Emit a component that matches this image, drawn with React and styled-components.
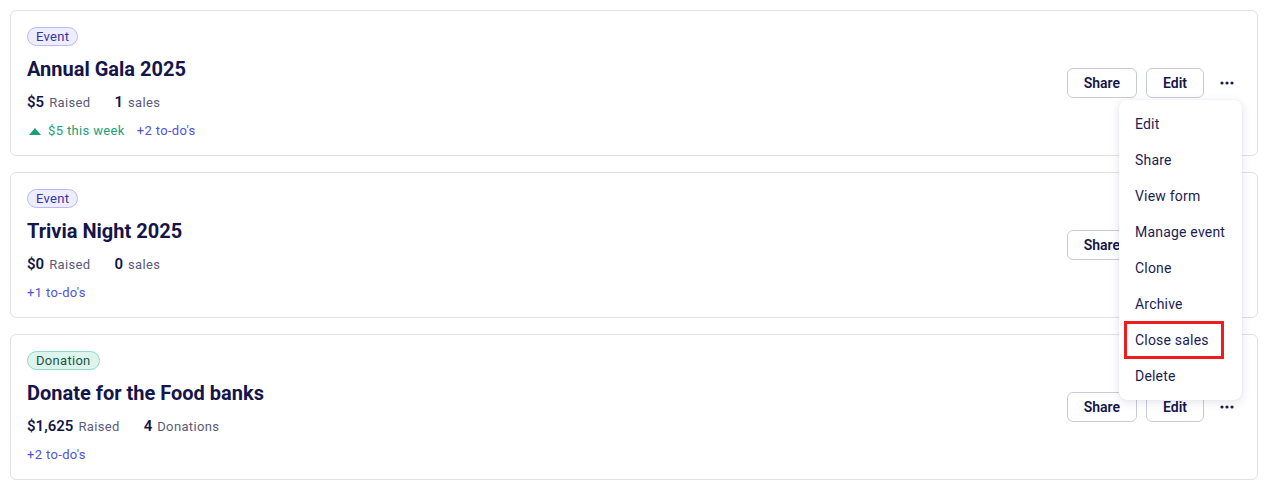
import React from 'react';
import styled, { createGlobalStyle, css } from 'styled-components';

const GlobalStyle = createGlobalStyle`
  body {
    margin: 0;
    background: #ffffff;
    font-family: Roboto, "Liberation Sans", sans-serif;
    color: #16164d;
  }
`;

const Page = styled.div`
  display: flex;
  flex-direction: column;
  gap: 16px;
  padding: 10px;
`;

const Card = styled.div`
  display: flex;
  align-items: center;
  justify-content: space-between;
  border: 1px solid #e1e1ec;
  border-radius: 6px;
  padding: 16px;
  height: 146px;
  box-sizing: border-box;
  background: #fff;
`;

const Info = styled.div`
  display: flex;
  flex-direction: column;
  align-self: flex-start;
`;

const badgeColors = {
  event: css`
    background: #ededfd;
    border-color: #b9b9f4;
    color: #3535a8;
  `,
  donation: css`
    background: #dcf4ec;
    border-color: #93d9c3;
    color: #1b5646;
  `,
};

const Badge = styled.span`
  align-self: flex-start;
  font-size: 13px;
  line-height: 17px;
  padding: 0 8px;
  border: 1px solid;
  border-radius: 10px;
  letter-spacing: 0.3px;
  ${p => badgeColors[p.$kind]}
`;

const Title = styled.h2`
  margin: 9px 0 0;
  font-size: 20px;
  line-height: 28px;
  font-weight: 700;
  color: #14154a;
`;

const Stats = styled.div`
  display: flex;
  gap: 24px;
  margin-top: 10px;
  align-items: baseline;
`;

const Stat = styled.span`
  font-size: 13px;
  color: #5a5a78;
  letter-spacing: 0.35px;

  b {
    font-size: 15px;
    font-weight: 600;
    color: #14154a;
    margin-right: 5px;
    letter-spacing: 0;
  }
`;

const Meta = styled.div`
  display: flex;
  gap: 12px;
  margin-top: 12px;
  font-size: 13px;
  line-height: 16px;
  letter-spacing: 0.35px;
`;

const Trend = styled.span`
  display: flex;
  align-items: center;
  gap: 7px;
  padding-left: 2px;
  color: #1c9e78;
`;

const Todo = styled.span`
  color: #5252d6;
`;

const Actions = styled.div`
  position: relative;
  display: flex;
  align-items: center;
  gap: 9px;
`;

const Button = styled.button`
  height: 30px;
  padding: 0 16px;
  border: 1px solid #c9c9dc;
  border-radius: 6px;
  background: #fff;
  font-family: inherit;
  font-size: 14px;
  font-weight: 600;
  color: #14154a;
`;

const DotsButton = styled.button`
  width: 28px;
  height: 30px;
  padding: 0;
  border: none;
  background: none;
  display: flex;
  align-items: center;
  justify-content: center;
`;

const Menu = styled.ul`
  position: absolute;
  top: 32px;
  right: -1px;
  width: 123px;
  margin: 0;
  padding: 6px 0;
  list-style: none;
  background: #fff;
  border-radius: 8px;
  box-shadow: 0 2px 10px rgba(40, 40, 90, 0.13), 0 0 1px rgba(40, 40, 90, 0.12);
  z-index: 5;
`;

const MenuItem = styled.li`
  position: relative;
  height: 36px;
  line-height: 36px;
  padding-left: 16px;
  font-size: 14px;
  letter-spacing: 0.2px;
  color: #1c1c52;

  ${p =>
    p.$highlight &&
    css`
      &::after {
        content: '';
        position: absolute;
        left: 5px;
        width: 100px;
        top: -1px;
        bottom: -1px;
        box-sizing: border-box;
        border: 3px solid #ee1c1c;
      }
    `}
`;

const Dots = () => (
  <svg width="14" height="4" viewBox="0 0 14 4">
    <circle cx="2" cy="2" r="1.6" fill="#1c1c52" />
    <circle cx="7" cy="2" r="1.6" fill="#1c1c52" />
    <circle cx="12" cy="2" r="1.6" fill="#1c1c52" />
  </svg>
);

const TriangleUp = () => (
  <svg width="12" height="7" viewBox="0 0 12 7">
    <path d="M6 0 L12 7 L0 7 Z" fill="#1c9e78" />
  </svg>
);

const menuItems = ['Edit', 'Share', 'View form', 'Manage event', 'Clone', 'Archive', 'Close sales', 'Delete'];

const campaigns = [
  { kind: 'event', label: 'Event', title: 'Annual Gala 2025', raised: '$5', count: '1', unit: 'sales', week: '$5 this week', todos: '+2 to-do\'s', menu: true },
  { kind: 'event', label: 'Event', title: 'Trivia Night 2025', raised: '$0', count: '0', unit: 'sales', todos: '+1 to-do\'s' },
  { kind: 'donation', label: 'Donation', title: 'Donate for the Food banks', raised: '$1,625', count: '4', unit: 'Donations', todos: '+2 to-do\'s' },
];

export default function App() {
  return (
    <>
      <GlobalStyle />
      <Page>
        {campaigns.map(c => (
          <Card key={c.title}>
            <Info>
              <Badge $kind={c.kind}>{c.label}</Badge>
              <Title>{c.title}</Title>
              <Stats>
                <Stat><b>{c.raised}</b>Raised</Stat>
                <Stat><b>{c.count}</b>{c.unit}</Stat>
              </Stats>
              <Meta>
                {c.week && (
                  <Trend>
                    <TriangleUp />
                    {c.week}
                  </Trend>
                )}
                <Todo>{c.todos}</Todo>
              </Meta>
            </Info>
            <Actions>
              <Button>Share</Button>
              <Button>Edit</Button>
              <DotsButton aria-label="More"><Dots /></DotsButton>
              {c.menu && (
                <Menu>
                  {menuItems.map(m => (
                    <MenuItem key={m} $highlight={m === 'Close sales'}>{m}</MenuItem>
                  ))}
                </Menu>
              )}
            </Actions>
          </Card>
        ))}
      </Page>
    </>
  );
}
